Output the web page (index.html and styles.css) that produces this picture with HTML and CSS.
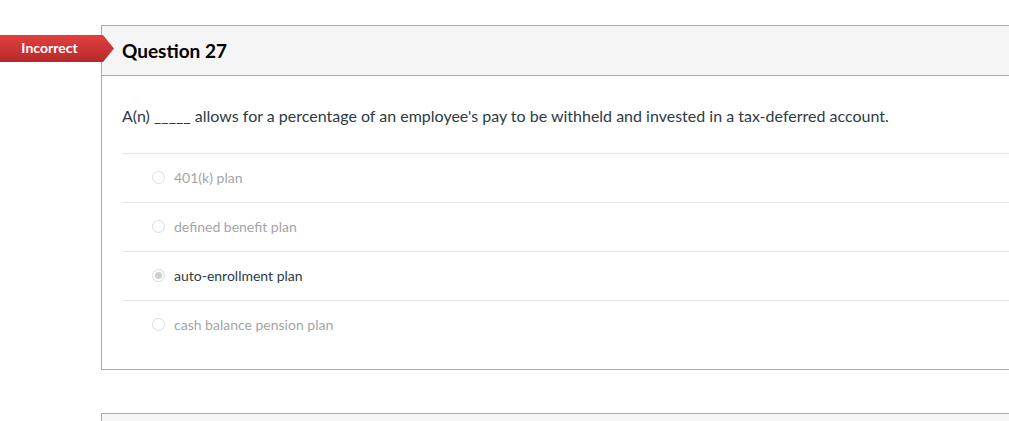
FILE: index.html
```html
<!DOCTYPE html>
<html>
<head>
<meta charset="utf-8">
<link rel="stylesheet" href="styles.css">
</head>
<body>
<div class="page">
  <div class="card">
    <div class="badge">Incorrect</div>
    <div class="header"><h2 class="title">Question 27</h2></div>
    <div class="body">
      <p class="question">A(n) _____ allows for a percentage of an employee's pay to be withheld and invested in a tax-deferred account.</p>
      <ul class="answers">
        <li class="answer"><span class="radio"></span><span class="label">401(k) plan</span></li>
        <li class="answer"><span class="radio"></span><span class="label">defined benefit plan</span></li>
        <li class="answer selected"><span class="radio"></span><span class="label">auto-enrollment plan</span></li>
        <li class="answer"><span class="radio"></span><span class="label">cash balance pension plan</span></li>
      </ul>
    </div>
  </div>
  <div class="card next">
    <div class="header"></div>
  </div>
</div>
</body>
</html>
```

FILE: styles.css
```css
html, body {
  margin: 0;
  padding: 0;
  background: #fff;
  font-family: Lato, "Liberation Sans", sans-serif;
  color: #2d3b45;
  overflow: hidden;
  height: 421px;
}
.page {
  padding-top: 25px;
  padding-left: 101px;
}
.card {
  position: relative;
  border: 1px solid #aaaaaa;
  border-right: none;
  margin-right: -20px;
}
.header {
  background: #f5f5f5;
  height: 49px;
  border-bottom: 1px solid #aaaaaa;
  display: flex;
  align-items: center;
  padding-left: 20px;
}
.title {
  margin: 0;
  font-size: 19px;
  font-weight: 700;
  color: #000;
}
.badge {
  position: absolute;
  left: -102px;
  top: 9px;
  width: 114px;
  height: 27px;
  box-sizing: border-box;
  padding-right: 15px;
  padding-bottom: 2px;
  display: flex;
  align-items: center;
  justify-content: center;
  color: #fff;
  font-weight: 700;
  font-size: 14px;
  background: linear-gradient(#e2403f, #b5292a);
  clip-path: polygon(0 0, 103px 0, 114px 50%, 103px 100%, 0 100%);
}
.body {
  padding: 0 0 20px 20px;
}
.question {
  margin: 0;
  padding: 30px 0 27px;
  font-size: 16px;
  line-height: 20px;
}
.answers {
  list-style: none;
  margin: 0;
  padding: 0;
}
.answer {
  border-top: 1px solid #e6e6e6;
  height: 48px;
  box-sizing: border-box;
  height: 49px;
  padding-bottom: 2px;
  display: flex;
  align-items: center;
  padding-left: 30px;
  font-size: 14px;
  color: #a5a5a5;
}
.radio {
  width: 11px;
  height: 11px;
  border: 1px solid #dcdcdc;
  border-radius: 50%;
  margin-right: 9px;
  position: relative;
  background: #fff;
}
.selected .radio::after {
  content: "";
  position: absolute;
  left: 2px;
  top: 2px;
  width: 7px;
  height: 7px;
  border-radius: 50%;
  background: #cfcfcf;
}
.selected {
  color: #2d3b45;
}
.next {
  margin-top: 43px;
}
```
